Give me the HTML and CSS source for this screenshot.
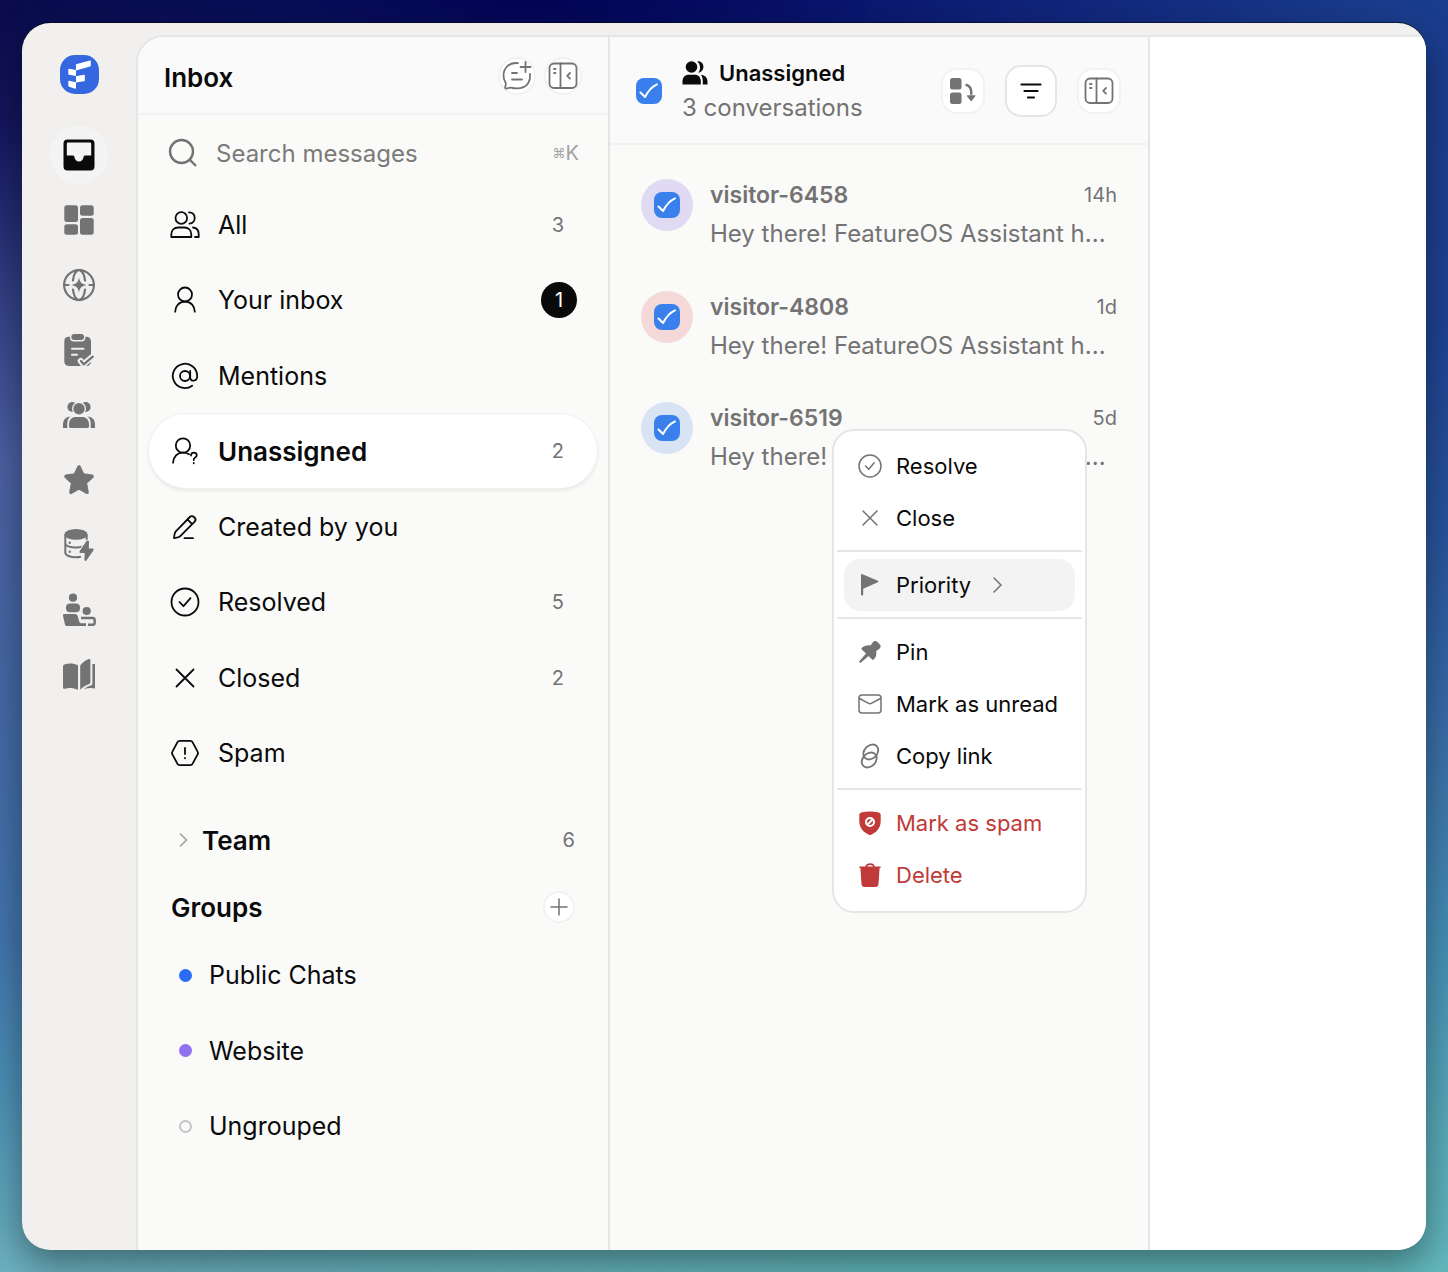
FILE: index.html
```html
<!DOCTYPE html>
<html lang="en">
<head>
    <meta charset="UTF-8">
    <meta name="viewport" content="width=device-width, initial-scale=1.0">
    <title>Inbox</title>
    <link rel="stylesheet" href="styles.css">
</head>
<body>
    <div class="window">
        <nav class="rail">
            <a href="#" class="logo" aria-label="Home">
                <svg width="39" height="39" viewBox="0 0 39 39">
                    <rect width="39" height="39" rx="15" fill="#3568e0"/>
                    <path d="M16 9.2 30 5.4q.8-.1.8.6v4.4q0 .8-.8 1L16 15.6v5.6l8-1.4q.8-.1.8.6v4.8q0 .8-.8 1l-8 1.3v5.4q0 1-.9.8l-6-2q-.8-.3-.8-1v-4.3q0-.8.8-.7l6.9 1.6v-6.3l-6.9-1.2q-.8-.2-.8-1v-4.3q0-.8.8-.7l6.9 1.3z" fill="#fff"/>
                </svg>
            </a>
            <a href="#" class="rail-link active" aria-label="Inbox">
                <svg width="32" height="32" viewBox="0 0 32 32"><path fill-rule="evenodd" d="M4.500.5h23a4 4 0 0 1 4 4v23a4 4 0 0 1-4 4h-23a4 4 0 0 1-4-4v-23a4 4 0 0 1 4-4zM5 3.600a1.200 1.200 0 0 0-1.200 1.200v11.700H10c1 0 1.300.7 1.500 1.800.4 2.700 2 4.200 4.500 4.200s4.100-1.500 4.500-4.200c.2-1.100.5-1.800 1.500-1.800h6.200V4.800A1.200 1.200 0 0 0 27 3.600z"/></svg>
            </a>
            <a href="#" class="rail-link" aria-label="Dashboard">
                <svg width="32" height="32" viewBox="0 0 32 32"><rect x="1.300" y="1.300" width="13.700" height="16.700" rx="2.500"/><rect x="17" y="1.300" width="13.700" height="10.400" rx="2.500"/><rect x="1.300" y="20.200" width="13.700" height="10.500" rx="2.500"/><rect x="17" y="13.900" width="13.700" height="16.800" rx="2.500"/></svg>
            </a>
            <a href="#" class="rail-link" aria-label="Portal">
                <svg width="32" height="32" viewBox="0 0 32 32"><g fill="none" stroke="currentColor" stroke-width="2.200"><circle cx="16" cy="16" r="14.900"/><path d="M10 11.500C10.500 6.500 12.500 2.500 15 1M22 11.500C21.500 6.500 19.500 2.500 17 1M10 20.500c.5 5 2.500 9 5 10.500M22 20.500c-.5 5-2.500 9-5 10.500M1 16h4.500M26.500 16H31" stroke-linecap="round"/></g><path d="M16 8.500c1 5 2.500 6.500 7.500 7.500-5 1-6.500 2.500-7.500 7.500-1-5-2.500-6.500-7.500-7.500 5-1 6.500-2.500 7.500-7.500z"/></svg>
            </a>
            <a href="#" class="rail-link" aria-label="Surveys">
                <svg width="32" height="32" viewBox="0 0 32 32"><path d="M5 2.700h18.500a4.500 4.500 0 0 1 4.500 4.500v20.300a4.500 4.500 0 0 1-4.500 4.500H5.800a4.500 4.500 0 0 1-4.500-4.500V7.200A4.500 4.500 0 0 1 5 2.700z"/><rect x="7" y="-1" width="15.400" height="8.600" rx="4" class="cut"/><rect x="8.300" y="0" width="12.800" height="6" rx="3"/><g fill="none" stroke-linecap="round" stroke-linejoin="round"><path d="M9 14.700h11.500M9 20.700h5" class="cut-line" stroke-width="2"/><path d="m17.700 27 2.800 3.300 9.300-7.800" class="cut-line" stroke-width="6"/><path d="m18 27 2.700 3.300 9.100-7.600" stroke="currentColor" stroke-width="2.200"/></g></svg>
            </a>
            <a href="#" class="rail-link" aria-label="People">
                <svg width="32" height="32" viewBox="0 0 32 32"><circle cx="9.300" cy="8" r="4.900"/><circle cx="22.700" cy="8" r="4.900"/><path d="M0 29v-3.500C0 20.500 3 17.500 8 17.500h16c5 0 8 3 8 8V29z"/><path d="M4.300 30v-5.500c0-5 3-8.500 8-8.500h7.400c5 0 8 3.500 8 8.500V30z" class="cut"/><circle cx="16" cy="9.700" r="7" class="cut"/><circle cx="16" cy="9.700" r="5.700"/><path d="M6 27.300v-1.800C6 20.500 9 18 13 18h6c4 0 7 2.500 7 7.500v1.800q0 1.700-1.700 1.700H7.700Q6 29 6 27.300z"/></svg>
            </a>
            <a href="#" class="rail-link" aria-label="Favourites">
                <svg width="32" height="32" viewBox="0 0 32 32"><path d="m16 3 3.800 8 9.200 1.400-6.700 6.400 1.700 9.500-8-4.500-8 4.500 1.700-9.500L3 12.400 12.200 11z" stroke="currentColor" stroke-width="3.600" stroke-linejoin="round"/></svg>
            </a>
            <a href="#" class="rail-link" aria-label="Data">
                <svg width="32" height="32" viewBox="0 0 32 32"><ellipse cx="13" cy="5.400" rx="11.600" ry="5.400"/><g fill="none" stroke="currentColor" stroke-width="2"><path d="M2.300 5.500v18.300c0 2.500 5 4.500 10.700 4.500 2 0 3.500-.2 5-.5M23.700 5.500v6M2.300 14.500c0 2.300 4.700 4 10.700 4 2.500 0 5-.4 7-1"/></g><circle cx="6.700" cy="13.700" r="1.200"/><circle cx="6.700" cy="22.800" r="1.200"/><path d="m23.300 12.300-6.700 10c-.5.800-.1 1.600.8 1.600h4.300l-.3 6.700c0 1.500 1.500 1.800 2.200.7l6.900-10.100c.5-.8.100-1.600-.8-1.600h-3.900l.2-6.600c0-1.600-1.900-2-2.700-.7z" class="halo"/></svg>
            </a>
            <a href="#" class="rail-link" aria-label="Meetings">
                <svg width="32" height="32" viewBox="0 0 32 32"><circle cx="10" cy="3.700" r="4.100"/><rect x="3" y="9.500" width="14" height="8.700" rx="4"/><path d="M1.300 20H12c1.500 0 2.300.7 2.700 2l1.600 5.800q.4 1.400 1.700 1.400h5V32H4.300c-1.200 0-2-.5-2.300-1.500L0 21.700C-.2 20.600.4 20 1.300 20z"/><circle cx="23.700" cy="17" r="4.100"/><path d="M18 24h11.500q2.200 0 2.200 2.200v2.500q0 2-2 2H25" fill="none" stroke="currentColor" stroke-width="2.400"/></svg>
            </a>
            <a href="#" class="rail-link" aria-label="Docs">
                <svg width="32" height="32" viewBox="0 0 32 32"><path d="M1.300 5.500C6 3.800 10.500 4 15 6.300V31c-4.500-2.300-9-2.500-13.200-1.300-1 .3-1.800-.2-1.800-1V7.300Q0 6 1.300 5.500zM17.200 6.500c2.500-3 5.500-5.300 8.500-6.400q1.700-.5 1.700 1V23c0 1.200-.5 1.800-1.600 2.200-3.600 1.200-6.100 2.700-8.600 5.500zM29.400 5H32v24.500c-3.500-.8-7.500-.8-11 .7 2-2 4.500-3 6.800-3.700 1.200-.4 1.600-1 1.600-2.300z"/></svg>
            </a>
        </nav>

        <main class="workspace">
            <aside class="inbox">
                <header class="inbox-header">
                    <h1>Inbox</h1>
                    <button type="button" class="round-btn" aria-label="New conversation">
                        <svg width="30" height="30" viewBox="0 0 30 30"><g class="line"><path d="M16 2.200C8 1 1.500 6.500 1.500 14.500c0 3 .8 5 2 7 .6 1 .5 2-.2 4-.5 1.700 0 2.300 1.500 2 1.500-.4 2.700-1.200 4-.9C16 28.500 29 28 28 13M23.500 1v10M18.500 6h10M10 12h5M10 18.500h10"/></g></svg>
                    </button>
                    <button type="button" class="round-btn" aria-label="Collapse sidebar">
                        <svg width="30" height="30" viewBox="0 0 30 30"><g class="line"><rect x="1.500" y="2.500" width="27" height="24.500" rx="4.500"/><path d="M12.500 2.500V27M6 8h1.500M6 12h1.500M22 12l-2.800 2.800L22 17.600"/></g></svg>
                    </button>
                </header>

                <label class="search">
                    <svg width="30" height="30" viewBox="0 0 30 30"><g fill="none" stroke="currentColor" stroke-width="2.400"><circle cx="13.500" cy="13.500" r="11.500"/><path d="m22 22 6 6"/></g></svg>
                    <input type="search" placeholder="Search messages" aria-label="Search messages">
                    <kbd><span class="cmd">⌘</span>K</kbd>
                </label>

                <ul class="folders">
                    <li><a href="#">
                        <svg width="30" height="30" viewBox="0 0 30 30"><g class="line"><circle cx="11.300" cy="8" r="5.800"/><path d="M1.300 27v-2.500c0-4.500 3-7 7-7h6c4 0 7 2.500 7 7V27zM19 2.300c7.500-.3 7.500 11 .5 11.300M23 17.500c3.500.5 5.700 3 5.700 6.500v3H25"/></g></svg>
                        <span class="name">All</span><span class="count">3</span>
                    </a></li>
                    <li><a href="#">
                        <svg width="30" height="30" viewBox="0 0 30 30"><g class="line"><circle cx="15" cy="9.500" r="7"/><path d="M5.200 26.700C5.200 21 9 16.700 15 16.700S24.800 21 24.800 26.700"/></g></svg>
                        <span class="name">Your inbox</span><span class="count badge">1</span>
                    </a></li>
                    <li><a href="#">
                        <svg width="30" height="30" viewBox="0 0 30 30"><g class="line"><circle cx="15" cy="15" r="5"/><path d="M20.200 9.800V16.500c0 4.500 7 4.500 7-1.500a12.200 12.200 0 1 0-5 9.800"/></g></svg>
                        <span class="name">Mentions</span>
                    </a></li>
                    <li><a href="#" class="selected" aria-current="page">
                        <svg width="30" height="30" viewBox="0 0 30 30"><g class="line"><circle cx="13" cy="9.500" r="7.200"/><path d="M3 26.700c.3-6 4.500-10 10-10 2.500 0 4 .3 6 1.500M21 19.500c0-4 6-3.700 5.700-.2-.2 2.200-3 2-3 4.700M23.700 27v.3"/></g></svg>
                        <span class="name">Unassigned</span><span class="count">2</span>
                    </a></li>
                    <li><a href="#">
                        <svg width="30" height="30" viewBox="0 0 30 30"><g class="line"><path d="M4 26.200c.2-3.200.2-5 1.600-6.600L19.800 5c2.800-2.600 7.500 1.700 4.900 4.700L10.300 24.200C8.800 25.700 7 25.700 4 26.200zM17.500 7.500l4.700 4.700M14.500 26.200h8.500"/></g></svg>
                        <span class="name">Created by you</span>
                    </a></li>
                    <li><a href="#">
                        <svg width="30" height="30" viewBox="0 0 30 30"><g class="line"><circle cx="15" cy="15" r="13.500"/><path d="m9.500 15 4 4.200 7-8"/></g></svg>
                        <span class="name">Resolved</span><span class="count">5</span>
                    </a></li>
                    <li><a href="#">
                        <svg width="30" height="30" viewBox="0 0 30 30"><g class="line"><path d="m6.500 6.500 17 17M23.500 6.500l-17 17"/></g></svg>
                        <span class="name">Closed</span><span class="count">2</span>
                    </a></li>
                    <li><a href="#">
                        <svg width="30" height="30" viewBox="0 0 30 30"><g class="line"><path d="M9.700 2.800h10.600q1.500 0 2.200 1.300l5.100 9.500q.8 1.400 0 2.800l-5.100 9.500q-.7 1.300-2.200 1.300H9.700q-1.500 0-2.200-1.300l-5.100-9.500q-.8-1.400 0-2.800l5.100-9.500q.7-1.300 2.200-1.300zM15 10v6M15 20v.3"/></g></svg>
                        <span class="name">Spam</span>
                    </a></li>
                </ul>

                <button type="button" class="team">
                    <svg width="24" height="24" viewBox="0 0 24 24"><path d="m9 5.500 6.500 6.500L9 18.500" class="chevron"/></svg>
                    <span class="name">Team</span><span class="count">6</span>
                </button>

                <div class="groups-header">
                    <h2>Groups</h2>
                    <button type="button" aria-label="Add group">
                        <svg width="18" height="18" viewBox="0 0 18 18"><path d="M9 .5v17M.5 9h17" fill="none" stroke="currentColor" stroke-width="1.500"/></svg>
                    </button>
                </div>
                <ul class="groups">
                    <li><a href="#"><span class="dot blue"></span>Public Chats</a></li>
                    <li><a href="#"><span class="dot purple"></span>Website</a></li>
                    <li><a href="#"><span class="dot"></span>Ungrouped</a></li>
                </ul>
            </aside>

            <section class="list">
                <header class="list-header">
                    <input type="checkbox" aria-label="Select all conversations" checked>
                    <div class="list-title">
                        <h2>
                            <svg width="26" height="26" viewBox="0 0 26 26"><circle cx="9.500" cy="7" r="5.800"/><path d="M.5 24.500v-3c0-4 2.500-6.700 6.500-6.700h5.500c4 0 6.300 2.700 6.300 6.700v3zM15.300 1.200c7.500-.8 8.500 10 1 11.500 2.500-3 2.500-8-1-11.500zM19 14.700c4.300.5 6.500 3 6.500 7v2.800h-4.700v-3c0-3-.5-5-1.800-6.800z"/></svg>
                            Unassigned
                        </h2>
                        <p>3 conversations</p>
                    </div>
                    <div class="tools">
                        <button type="button" aria-label="Sort">
                            <svg width="28" height="28" viewBox="0 0 28 28"><rect x="1" y="1" width="11.500" height="11.500" rx="2.500"/><rect x="1" y="15.500" width="11.500" height="11.500" rx="2.500"/><path d="M17.500 8c3.500.8 5 4 4.800 9" fill="none" stroke="currentColor" stroke-width="2.400" stroke-linecap="round"/><path d="M18.500 18.300h7.300q1.200 0 .5 1l-3.300 4.200q-.8 1-1.600 0L18 19.300q-.6-1 .5-1z"/></svg>
                        </button>
                        <button type="button" class="filter" aria-label="Filter">
                            <svg width="28" height="28" viewBox="0 0 28 28"><path d="M4.500 7.500h19M7.500 14h13M11 20.500h6" fill="none" stroke="currentColor" stroke-width="2.200" stroke-linecap="round"/></svg>
                        </button>
                        <button type="button" aria-label="Collapse list">
                            <svg width="30" height="30" viewBox="0 0 30 30"><g class="line"><rect x="1.500" y="2.500" width="27" height="24.500" rx="4.500"/><path d="M12.500 2.500V27M6 8h1.500M6 12h1.500M22 12l-2.800 2.800L22 17.600"/></g></svg>
                        </button>
                    </div>
                </header>

                <ul class="conversations">
                    <li class="conversation">
                        <span class="avatar lilac"><input type="checkbox" aria-label="Select visitor-6458" checked></span>
                        <div class="summary">
                            <h3>visitor-6458</h3><time>14h</time>
                            <p>Hey there! FeatureOS Assistant h...</p>
                        </div>
                    </li>
                    <li class="conversation">
                        <span class="avatar pink"><input type="checkbox" aria-label="Select visitor-4808" checked></span>
                        <div class="summary">
                            <h3>visitor-4808</h3><time>1d</time>
                            <p>Hey there! FeatureOS Assistant h...</p>
                        </div>
                    </li>
                    <li class="conversation">
                        <span class="avatar sky"><input type="checkbox" aria-label="Select visitor-6519" checked></span>
                        <div class="summary">
                            <h3>visitor-6519</h3><time>5d</time>
                            <p>Hey there! FeatureOS Assistant h...</p>
                        </div>

                        <div class="menu" role="menu">
                            <button type="button" role="menuitem">
                                <svg width="24" height="24" viewBox="0 0 24 24"><g class="line"><circle cx="12" cy="12" r="11"/><path d="m7.500 12 3.200 3.300 5.500-6.500"/></g></svg>
                                Resolve
                            </button>
                            <button type="button" role="menuitem">
                                <svg width="24" height="24" viewBox="0 0 24 24"><g class="line"><path d="m5 5 14 14M19 5 5 19"/></g></svg>
                                Close
                            </button>
                            <hr>
                            <button type="button" role="menuitem" class="hover" aria-haspopup="true">
                                <svg width="24" height="24" viewBox="0 0 24 24"><path d="M3 2.200Q3 .7 4.500 1.200L19.800 7.800q1.400.7 0 1.500L5.200 15.800V21.500q0 1-1.100 1T3 21.500z"/></svg>
                                Priority
                                <svg width="24" height="24" viewBox="0 0 24 24"><g class="line"><path d="m9 5 7 7-7 7"/></g></svg>
                            </button>
                            <hr>
                            <button type="button" role="menuitem">
                                <svg width="24" height="24" viewBox="0 0 24 24"><path d="M14.500 2.800c1.500-2.300 3.500-2.200 5.200-.6l1.800 1.800c1.700 1.700 1.600 3.700-.7 5.200l-2.600 1.700c.7 3.500-.3 6.600-2.700 8.700q-.7.600-1.400 0L10.500 16 2.500 23l-1.600-1.300L8 13.500 3.700 9.500q-.7-.8 0-1.400C6 6 9 5 12.600 5.500z"/></svg>
                                Pin
                            </button>
                            <button type="button" role="menuitem">
                                <svg width="24" height="24" viewBox="0 0 24 24"><g class="line"><rect x="1" y="3" width="22" height="18" rx="3"/><path d="m1.500 6.500 8.700 4.700q1.800 1 3.600 0l8.700-4.700"/></g></svg>
                                Mark as unread
                            </button>
                            <button type="button" role="menuitem">
                                <svg width="24" height="24" viewBox="0 0 24 24"><g fill="none" stroke="currentColor" stroke-width="1.800"><ellipse cx="12.800" cy="8" rx="8.400" ry="6.400" transform="rotate(-45 12.800 8)"/><ellipse cx="11.200" cy="16" rx="8.400" ry="6.400" transform="rotate(-45 11.200 16)"/></g></svg>
                                Copy link
                            </button>
                            <hr>
                            <button type="button" role="menuitem" class="danger">
                                <svg width="24" height="24" viewBox="0 0 24 24"><path d="M3 1.500C8.500 0 15.500 0 21 1.500q1.700.5 1.700 2.500V10c0 7-4.200 11.300-9.700 13.700q-1 .4-2 0C5.500 21.300 1.300 17 1.300 10V4Q1.300 2 3 1.500z"/><circle cx="12" cy="11" r="4" fill="none" stroke="#fff" stroke-width="2"/><path d="m9.300 13.700 5.400-5.400" fill="none" stroke="#fff" stroke-width="2"/></svg>
                                Mark as spam
                            </button>
                            <button type="button" role="menuitem" class="danger">
                                <svg width="24" height="24" viewBox="0 0 24 24"><path d="M2 3.500h20q.8 0 .8.800t-.8.800h-.4l-1.100 16q-.2 2.900-3 2.900h-11q-2.800 0-3-2.900l-1.100-16H2q-.8 0-.8-.8t.8-.8z"/><path d="M8 4.500C8 0 16 0 16 4.500" fill="none" stroke="currentColor" stroke-width="1.800"/></svg>
                                Delete
                            </button>
                        </div>
                    </li>
                </ul>
            </section>

            <section class="detail"></section>
        </main>
    </div>
</body>
</html>
```

FILE: styles.css
```css
*{
    padding: 0;
    margin: 0;
    box-sizing: border-box;
}
body{
    min-height: 100vh;
    display: flex;
    padding: 23px 22px 22px;
    font-family: Inter, "Liberation Sans", sans-serif;
    color: #0a0a0a;
    position: relative;
    overflow-x: hidden;
    background:
        radial-gradient(ellipse 60% 20% at 36% 0, #00005c, transparent),
        linear-gradient(#1a3c8c, #1e4292 25%, #28549c 42%, #3a6ea8 58%, #4690b4 75%, #58a8b8 88%, #62b8bc);

    /* left side of the wallpaper */
    &::before{
        content: "";
        position: absolute;
        inset: 0;
        background: linear-gradient(#090b4c, #14165c 10%, #303c80 22%, #4c60a0 36%, #4468a4 54%, #4274ac 74%, #4c90b4 86%, #6cb0be);
        mask-image: linear-gradient(to right, #000, transparent 60%);
    }
}
ul{
    list-style: none;
}
a{
    color: inherit;
    text-decoration: none;
}
button, input{
    font: inherit;
    color: inherit;
    background: none;
    border: none;
}
svg{
    display: block;
    flex: none;
    fill: currentColor;
    overflow: visible;
}
.line{
    fill: none;
    stroke: currentColor;
    stroke-width: 1.8;
    stroke-linecap: round;
    stroke-linejoin: round;
}
input[type="checkbox"]{
    appearance: none;
    flex: none;
    width: 26px;
    height: 26px;
    border-radius: 8px;

    &:checked{
        background: #3a80ec url("data:image/svg+xml,%3Csvg xmlns='http://www.w3.org/2000/svg' viewBox='0 0 26 26'%3E%3Cpath d='M4.500 14.500 9 19C12 13 16 8.500 21 6.300' fill='none' stroke='white' stroke-width='2' stroke-linecap='round' stroke-linejoin='round'/%3E%3C/svg%3E");
    }
}

.window{
    position: relative;
    flex: 1;
    display: flex;
    overflow: hidden;
    border-radius: 28px;
    background-color: #f1f0ee;
    box-shadow: 0 -1px 0 rgba(0,0,0,.5), 0 14px 36px rgba(0,0,0,.4);
}

/* icon rail */
.rail{
    flex: none;
    width: 114px;
    padding-top: 32px;
    display: flex;
    flex-direction: column;
    align-items: center;
    gap: 7px;
    color: #737373;

    .logo{
        margin-bottom: 25px;
    }
    .rail-link{
        width: 58px;
        height: 58px;
        border-radius: 50%;
        display: grid;
        place-items: center;
    }
    .active{
        color: #0a0a0a;
        background-color: #f4f4f4;
    }
    .cut{
        fill: #f1f0ee;
    }
    .cut-line{
        stroke: #f1f0ee;
    }
    .halo{
        stroke: #f1f0ee;
        stroke-width: 2;
        paint-order: stroke;
    }
}

.workspace{
    flex: 1;
    min-width: 0;
    margin-top: 12px;
    display: grid;
    grid-template-columns: 472px 540px 1fr;
    overflow: hidden;
    border: solid #e5e5e5;
    border-width: 2px 0 0 2px;
    border-top-left-radius: 28px;
    background-color: #fff;
}
.inbox, .list{
    background-color: #fafaf9;
    border-right: solid 2px #e5e5e5;
}
.inbox-header, .list-header{
    display: flex;
    align-items: center;
    background-color: #fafafa;
    border-bottom: solid 2px #f2f2f2;
}

/* inbox column */
.inbox-header{
    height: 78px;
    padding: 2px 26px 0;
    gap: 8px;
    color: #737373;

    h1{
        flex: 1;
        padding-top: 2px;
        font-size: 26px;
        font-weight: 600;
        color: #0a0a0a;
    }
    .round-btn{
        width: 38px;
        height: 38px;
        border: solid 2px #f2f2f2;
        border-radius: 50%;
        background-color: #fff;
        display: grid;
        place-items: center;
    }
}
.search{
    height: 70px;
    margin-top: 3px;
    padding: 0 29px 0 30px;
    display: flex;
    align-items: center;
    gap: 18px;
    color: #737373;

    input{
        flex: 1;
        min-width: 0;
        font-size: 24px;
        outline: none;
    }
    input::placeholder{
        color: #7a7a7a;
    }
    kbd{
        display: flex;
        align-items: center;
        font-family: inherit;
        font-size: 20px;
        color: #a3a3a3;
    }
    .cmd{
        font-size: 13px;
    }
}
.folders, .groups{
    display: grid;
    grid-auto-rows: 74px;
    align-content: space-between;
    padding: 0 11px;
    font-size: 25px;

    a{
        height: 100%;
        display: flex;
        align-items: center;
        border-radius: 37px;
    }
}
.folders{
    min-height: 602px;

    a{
        gap: 18px;
        padding: 0 33px 0 21px;
    }
    .selected{
        font-size: 26px;
        font-weight: 600;
        background-color: #fff;
        box-shadow: 0 0 0 1px #f0f0f0, 0 2px 4px rgba(0,0,0,.1);
    }
}
.name{
    flex: 1;
    text-align: left;
}
.count{
    font-size: 20px;
    font-weight: 400;
    color: #737373;
}
.badge{
    width: 36px;
    height: 36px;
    margin-right: -13px;
    border-radius: 50%;
    background-color: #0a0a0a;
    color: #fff;
    line-height: 36px;
    text-align: center;
}
.team{
    width: 100%;
    height: 68px;
    margin-top: 16px;
    padding: 0 33px;
    display: flex;
    align-items: center;
    gap: 7px;
    font-size: 26px;
    font-weight: 600;

    .chevron{
        fill: none;
        stroke: #a3a3a3;
        stroke-width: 1.7;
    }
}
.groups-header{
    height: 64px;
    padding: 2px 33px 0;
    display: flex;
    align-items: center;
    justify-content: space-between;

    h2{
        font-size: 26px;
        font-weight: 600;
    }
    button{
        width: 32px;
        height: 32px;
        border: solid 2px #f2f2f2;
        border-radius: 50%;
        background-color: #fff;
        color: #737373;
        display: grid;
        place-items: center;
    }
}
.groups{
    min-height: 225px;

    a{
        gap: 17px;
        padding-left: 30px;
    }
}
.dot{
    width: 13px;
    height: 13px;
    border: solid 2px #c4c4c4;
    border-radius: 50%;

    &.blue{
        border: none;
        background-color: #2a6cf4;
    }
    &.purple{
        border: none;
        background-color: #8e72f2;
    }
}

/* conversation column */
.list-header{
    height: 108px;
    padding: 2px 27px 0 26px;

    h2{
        display: flex;
        align-items: center;
        gap: 11px;
        font-size: 22px;
        font-weight: 600;
        line-height: 32px;
    }
    p{
        font-size: 24px;
        line-height: 38px;
        color: #737373;
    }
}
.list-title{
    flex: 1;
    margin-left: 20px;
    padding-top: 2px;
}
.tools{
    display: flex;
    align-items: center;
    gap: 20px;
    color: #737373;

    button{
        width: 44px;
        height: 46px;
        border: solid 2px #f2f2f2;
        border-radius: 16px;
        background-color: #fff;
        display: grid;
        place-items: center;
    }
    .filter{
        width: 52px;
        height: 52px;
        border-color: #e5e5e5;
        color: #0a0a0a;
    }
}
.conversations{
    padding: 28px 31px;
    display: grid;
    grid-auto-rows: 84px;
    align-content: space-between;
    min-height: 363px;
}
.conversation{
    position: relative;
    display: flex;
    gap: 17px;
    padding-top: 6px;
    color: #737373;
}
.avatar{
    flex: none;
    width: 52px;
    height: 52px;
    border-radius: 50%;
    display: grid;
    place-items: center;

    &.lilac{
        background-color: #e0daf5;
    }
    &.pink{
        background-color: #f5d9d9;
    }
    &.sky{
        background-color: #d8e3f4;
    }
}
.summary{
    flex: 1;
    display: grid;
    grid-template-columns: 1fr auto;
    align-content: start;
    align-items: center;

    h3{
        font-size: 23px;
        font-weight: 600;
        line-height: 32px;
    }
    time{
        font-size: 20px;
    }
    p{
        grid-column: 1 / -1;
        font-size: 24px;
        line-height: 46px;
        white-space: nowrap;
    }
}

/* context menu */
.menu{
    position: absolute;
    top: 33px;
    left: 191px;
    z-index: 1;
    width: 255px;
    padding: 9px 0 10px;
    border: solid 2px #e5e5e5;
    border-radius: 22px;
    background-color: #fff;

    button{
        width: calc(100% - 20px);
        height: 52px;
        margin: 0 10px;
        padding-left: 14px;
        display: flex;
        align-items: center;
        gap: 14px;
        border-radius: 16px;
        font-size: 22px;
        color: #0a0a0a;
        white-space: nowrap;
    }
    button svg{
        color: #737373;
    }
    .line{
        stroke-width: 1.5;
    }
    .hover{
        background-color: #f3f3f3;
    }
    .danger, .danger svg{
        color: #bf3a38;
    }
    hr{
        margin: 6px 3px 7px;
        border: none;
        border-top: solid 2px #e5e5e5;
    }
}
```
